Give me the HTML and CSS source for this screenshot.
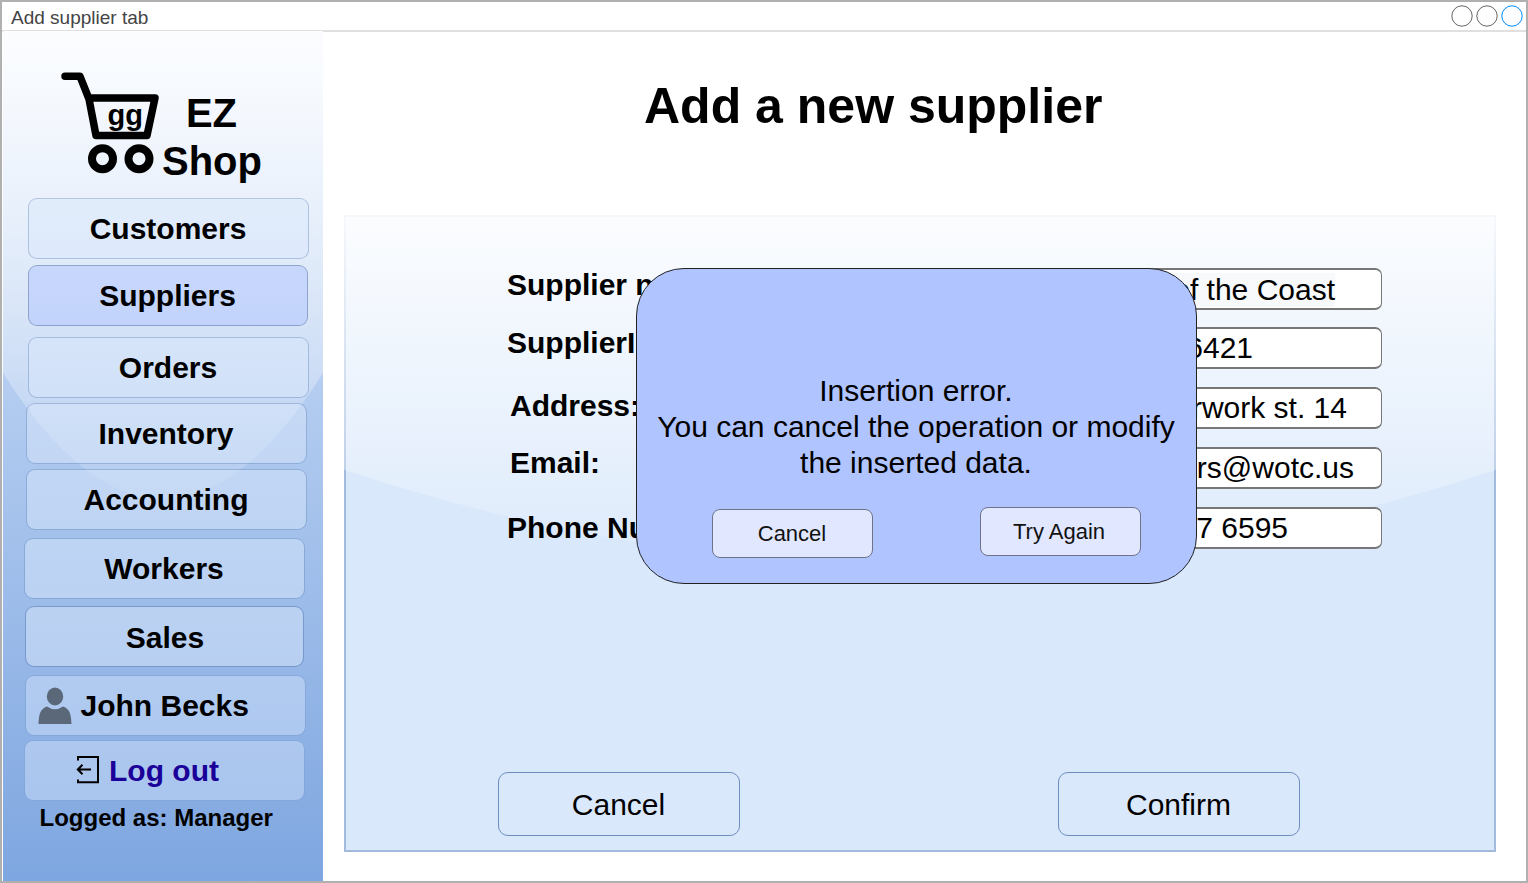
FILE: index.html
```html
<!DOCTYPE html>
<html lang="en">
<head>
<meta charset="utf-8">
<title>Add supplier tab</title>
<link rel="stylesheet" href="styles.css">
</head>
<body>
<div class="window">
  <header class="titlebar">
    <span class="tab-title">Add supplier tab</span>
    <svg class="controls" width="76" height="26" viewBox="0 0 76 26" fill="none" stroke="#666" stroke-width="1">
      <circle cx="12" cy="14" r="10.2"/>
      <circle cx="37" cy="14" r="10.2"/>
      <circle cx="62" cy="14" r="10.2" stroke="#008cff"/>
    </svg>
  </header>
  <div class="body">
    <aside class="sidebar">
      <svg class="glass" viewBox="0 0 100 100" preserveAspectRatio="none">
        <defs><linearGradient id="shine" x1="0" y1="0" x2="0" y2="1">
          <stop offset="0" stop-color="#fff" stop-opacity=".9"/>
          <stop offset="1" stop-color="#fff" stop-opacity=".1"/>
        </linearGradient></defs>
        <path d="M0 0V40.2Q50 69.8 100 40.2V0Z" fill="url(#shine)"/>
      </svg>
      <div class="logo">
        <svg class="cart" width="102" height="106" viewBox="0 0 102 106">
          <g fill="none" stroke="#000" stroke-width="7.5" stroke-linecap="round" stroke-linejoin="round">
            <path d="M5 6.3H20L29 29L36 65.5H87L95 28H29"/>
          </g>
          <g fill="none" stroke="#000" stroke-width="8">
            <circle cx="42.500" cy="88.700" r="10.500"/>
            <circle cx="79" cy="88.700" r="10.500"/>
          </g>
          <text class="cart-text" x="47.500" y="55">gg</text>
        </svg>
        <div class="brand">EZ<br>Shop</div>
      </div>
      <nav class="menu">
        <a class="item customers">Customers</a>
        <a class="item suppliers">Suppliers</a>
        <a class="item orders">Orders</a>
        <a class="item inventory">Inventory</a>
        <a class="item accounting">Accounting</a>
        <a class="item workers">Workers</a>
        <a class="item sales">Sales</a>
        <a class="item user">
          <svg width="34" height="38" viewBox="0 0 34 38" fill="#5a687a"><ellipse cx="17" cy="9.500" rx="8.200" ry="9"/><path d="M.5 37C1 27 2 22 9 19.500Q17 25 25 19.500C32 22 33 27 33.500 37Z"/></svg>
          <span>John Becks</span>
        </a>
        <a class="item logout">
          <svg width="24" height="29" viewBox="0 0 24 29" fill="none" stroke="#000" stroke-width="2"><path d="M2 4.500V.9H22V26.200H2V23.500M15 13.500H2M6.500 8.800L1.800 13.500L6.500 18.200"/></svg>
          <span>Log out</span>
        </a>
      </nav>
      <div class="role">Logged as: Manager</div>
    </aside>
    <main class="main">
      <h1 class="heading">Add a new supplier</h1>
      <section class="panel">
        <svg class="glass" viewBox="0 0 100 100" preserveAspectRatio="none">
          <path d="M0 0V40Q50 70 100 40V0Z" fill="url(#shine)"/>
        </svg>
        <div class="form">
          <div class="labels">
            <label class="l1">Supplier name:</label>
            <label class="l2">SupplierID:</label>
            <label class="l3">Address:</label>
            <label class="l4">Email:</label>
            <label class="l5">Phone Number:</label>
          </div>
          <div class="fields">
            <div class="field f1"><span class="marked">Wizards of the Coast</span></div>
            <div class="field f2">0006421</div>
            <div class="field f3">Waterwork st. 14</div>
            <div class="field f4">suppliers@wotc.us</div>
            <div class="field f5">425 227 6595</div>
          </div>
        </div>
        <div class="actions">
          <button class="btn">Cancel</button>
          <button class="btn">Confirm</button>
        </div>
      </section>
    </main>
  </div>
  <div class="dialog">
    <p class="message">Insertion error.<br>You can cancel the operation or modify<br>the inserted data.</p>
    <div class="choices">
      <button class="small">Cancel</button>
      <button class="small retry">Try Again</button>
    </div>
  </div>
</div>
</body>
</html>
```
FILE: styles.css
```css
* { box-sizing: border-box; }
body { margin: 0; font-family: "Liberation Sans", Arial, sans-serif; color: #000; }
.window { position: relative; width: 1528px; height: 883px; border: 2px solid #b0b0b0; background: #fff; overflow: hidden; }
.titlebar { display: flex; justify-content: space-between; height: 30px; border-bottom: 2px solid #e0e0e0; padding-left: 9px; }
.tab-title { font-size: 19px; line-height: 31px; color: #444; }
.controls { flex: none; }
.body { display: flex; height: 851px; margin-top: -1px; }
.sidebar { position: relative; flex: none; width: 320px; margin-left: 1px; background: linear-gradient(#dae8fc, #7ea6e0); }
.glass { position: absolute; inset: 0; width: 100%; height: 100%; }
.logo { position: relative; display: flex; height: 167px; padding: 39px 0 0 57px; }
.cart { flex: none; }
.cart-text { font-size: 29px; font-weight: bold; }
.brand { width: 99px; padding-top: 19px; font-size: 40px; line-height: 48px; font-weight: bold; text-align: center; }
.menu { position: relative; display: flex; flex-direction: column; }
.item { display: flex; align-items: center; justify-content: center; width: 281px; height: 61px; margin-left: 25px; padding-right: 1px; border: 1px solid rgba(108,142,191,.45); border-radius: 9px; background: rgba(218,232,252,.5); background-clip: padding-box; font-size: 30px; font-weight: bold; }
.suppliers { width: 280px; margin: 6px 0 11px 25px; border-color: rgba(90,120,175,.6); background-color: rgba(176,196,255,.5); }
.inventory { margin: 5px 0 5px 23px; }
.accounting { margin-left: 23px; }
.workers { margin: 8px 0 0 21px; }
.sales { width: 279px; margin: 7px 0 0 22px; padding: 2px 0 0 1px; border-color: rgba(90,120,175,.5); }
.user { margin: 8px 0 0 22px; justify-content: flex-start; padding-left: 12px; gap: 8.5px; border-color: rgba(108,142,191,.3); background-color: rgba(205,224,250,.5); }
.logout { margin: 4px 0 0 21px; justify-content: flex-start; padding-left: 51px; gap: 9px; color: #1a0099; border-color: rgba(108,142,191,.2); background-color: rgba(212,228,250,.45); }
.role { position: relative; padding: 3px 0 0 36.5px; font-size: 24px; line-height: 27px; font-weight: bold; }
.main { flex: 1; display: flex; flex-direction: column; }
.heading { margin: 46px 0 0 321px; font-size: 50px; line-height: 58px; font-weight: bold; white-space: nowrap; }
.panel { position: relative; width: 1152px; height: 637px; margin: 80px 0 0 21px; padding-bottom: 14px; background: #d9e8fb; border: 2px solid rgba(108,142,191,.5); display: flex; flex-direction: column; justify-content: space-between; }
.panel .glass { inset: -2px; width: 1152px; height: 637px; }
.form { position: relative; display: flex; padding-left: 161px; }
.labels { width: 501px; padding-top: 51px; font-size: 30px; line-height: 34px; font-weight: bold; display: flex; flex-direction: column; }
.l2 { margin-top: 24px; }
.l3 { margin: 29px 0 23px 3px; }
.l4 { margin: 0 0 31px 3px; }
.fields { width: 374px; padding-top: 51px; display: flex; flex-direction: column; gap: 18px; }
.field { display: flex; align-items: center; justify-content: flex-end; height: 42px; border: solid #777; border-width: 2px 1px; border-radius: 7px; background: #fff; font-size: 30px; line-height: 34px; }
.marked { background: #f8f9fa; }
.f1 { padding: 2px 46px 0 0; margin-bottom: -1px; }
.f2 { padding-right: 128px; }
.f3 { padding-right: 34px; }
.f4 { padding-right: 27px; }
.f5 { padding-right: 93px; }
.actions { position: relative; display: flex; gap: 318px; padding-left: 152px; }
.btn { width: 242px; height: 64px; padding: 1px 1px 0 0; border: 1px solid #6c8ebf; border-radius: 10px; background: #dae8fc; font: 30px "Liberation Sans", Arial, sans-serif; color: #000; }
.dialog { position: absolute; left: 633.5px; top: 266px; width: 561px; height: 316px; border: 1px solid #222; border-radius: 48px; background: #b0c4ff; padding-top: 104px; }
.message { margin: 0; font-size: 30px; line-height: 36px; text-align: center; white-space: nowrap; }
.choices { display: flex; gap: 107px; padding: 26px 0 0 75px; }
.small { width: 161px; height: 49px; margin-top: 2px; padding: 0; border: 1px solid #6d7388; border-radius: 8px; background: #e0e7ff; color: #111; font: 22px "Liberation Sans", Arial, sans-serif; }
.retry { margin-top: 0; padding-right: 2px; }
```
